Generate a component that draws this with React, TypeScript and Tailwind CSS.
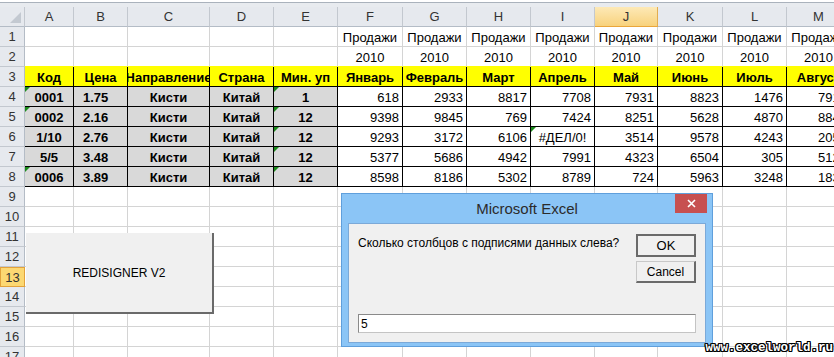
import React from "react";

type Cell = {
  t?: string;
  a?: "l" | "c" | "r" | "b";
  b?: boolean;
  bg?: "y" | "g";
  k?: boolean;
  yb?: boolean;
  tri?: boolean;
};

const letters = ["A", "B", "C", "D", "E", "F", "G", "H", "I", "J", "K", "L", "M"];
const hdrs = ["Код", "Цена", "Направление", "Страна", "Мин. уп", "Январь", "Февраль", "Март", "Апрель", "Май", "Июнь", "Июль", "Август"];
const left = [
  ["0001", "1.75", "Кисти", "Китай", "1"],
  ["0002", "2.16", "Кисти", "Китай", "12"],
  ["1/10", "2.76", "Кисти", "Китай", "12"],
  ["5/5", "3.48", "Кисти", "Китай", "12"],
  ["0006", "3.89", "Кисти", "Китай", "12"],
];
const nums = [
  ["618", "2933", "8817", "7708", "7931", "8823", "1476", "7912"],
  ["9398", "9845", "769", "7424", "8251", "5628", "4870", "8843"],
  ["9293", "3172", "6106", "#ДЕЛ/0!", "3514", "9578", "4243", "2056"],
  ["5377", "5686", "4942", "7991", "4323", "6504", "305", "5127"],
  ["8598", "8186", "5302", "8789", "724", "5963", "3248", "1834"],
];

function buildRows(): Cell[][] {
  const rows: Cell[][] = [];
  // row 1
  rows.push(letters.map((_, i) => (i >= 5 ? { t: "Продажи", a: "c" } : {})));
  // row 2
  rows.push(letters.map((_, i) => (i >= 5 ? { t: "2010", a: "c", yb: true } : { yb: true })));
  // row 3
  rows.push(hdrs.map((h) => ({ t: h, a: "c", b: true, bg: "y", k: true })));
  // rows 4-8
  left.forEach((l, r) => {
    const row: Cell[] = [];
    l.forEach((v, i) => {
      row.push({
        t: v,
        a: i === 1 ? "b" : "c",
        b: true,
        bg: "g",
        k: true,
        tri: (i === 0 && (r === 0 || r === 1 || r === 4)) || i === 4,
      });
    });
    nums[r].forEach((v, i) => {
      const err = v.startsWith("#");
      row.push({ t: v, a: err ? "c" : "r", k: true, tri: err });
    });
    rows.push(row);
  });
  for (let i = 9; i <= 17; i++) rows.push(letters.map(() => ({})));
  return rows;
}

function DataCell({ c }: { c: Cell }) {
  const bgc = c.bg === "y" ? "bg-[#ffff00]" : c.bg === "g" ? "bg-[#d9d9d9]" : "bg-white";
  const br = c.k
    ? "border-r-black border-b-black"
    : c.yb
    ? "border-r-[#d4d4d4] border-b-[#ffff00]"
    : "border-r-[#d4d4d4] border-b-[#d4d4d4]";
  const al =
    c.a === "l"
      ? "justify-start pl-[3px]"
      : c.a === "b"
      ? "justify-start pl-[9px]"
      : c.a === "r"
      ? "justify-end pr-[3px]"
      : "justify-center";
  return (
    <div
      className={`relative flex items-end overflow-hidden whitespace-nowrap border-r border-b pb-[1px] leading-[14px] ${bgc} ${br} ${al} ${
        c.b ? "font-bold" : ""
      }`}
    >
      {c.tri && (
        <div className="absolute left-0 top-0 h-0 w-0 border-t-[5px] border-r-[5px] border-t-[#1b8a1b] border-r-transparent" />
      )}
      {c.t && <span>{c.t}</span>}
    </div>
  );
}

export default function App() {
  const rows = buildRows();
  return (
    <div className="relative h-[357px] w-[834px] overflow-hidden bg-white font-['Liberation_Sans',Arial,sans-serif] text-[13px] text-black">
      {/* top strip */}
      <div className="h-[2px] bg-white" />
      <div className="h-[1px] bg-[#aab2bc]" />
      <div className="h-[4px] bg-[#e8ebef]" />
      {/* grid */}
      <div className="grid w-[851px] auto-rows-[20px] grid-cols-[25px_49px_54px_82px_64px_64px_65px_64px_64px_64px_63px_65px_64px_64px]">
        {/* header row */}
        <div className="relative border-r border-b border-r-[#c3c8cf] border-b-[#b4bcc6] bg-[#e6e9ee]">
          <svg className="absolute bottom-[3px] right-[3px]" width="11" height="11" viewBox="0 0 11 11">
            <polygon points="11,0 11,11 0,11" fill="#c3c9d1" />
          </svg>
        </div>
        {letters.map((l) =>
          l === "J" ? (
            <div
              key={l}
              className="flex items-center justify-center border-r border-b border-r-[#e3ad4f] border-b-[#eaa63b] bg-gradient-to-b from-[#fde9b6] to-[#f8d27c] text-[#333]"
            >
              {l}
            </div>
          ) : (
            <div
              key={l}
              className="flex items-center justify-center border-r border-b border-r-[#c3c8cf] border-b-[#b4bcc6] bg-[#e6e9ee] text-[#333]"
            >
              {l}
            </div>
          )
        )}
        {rows.map((row, ri) => (
          <React.Fragment key={ri}>
            {ri + 1 === 13 ? (
              <div className="flex items-center justify-center border border-[#e2a23b] bg-[#fcd872] pt-[1px] text-[#333]">
                {ri + 1}
              </div>
            ) : (
              <div className="flex items-center justify-center border-r border-b border-r-[#b4bcc6] border-b-[#c3c8cf] bg-[#e6e9ee] pt-[1px] text-[#333]">
                {ri + 1}
              </div>
            )}
            {row.map((c, ci) => (
              <DataCell key={ci} c={c} />
            ))}
          </React.Fragment>
        ))}
      </div>

      {/* REDISIGNER button */}
      <div className="absolute left-[26px] top-[233px] flex h-[81px] w-[188px] items-center justify-center border-r-2 border-b-2 border-r-[#6a6a6a] border-b-[#6a6a6a] bg-[#f0f0f0] text-[12px] text-black">
        REDISIGNER V2
      </div>

      {/* dialog */}
      <div className="absolute left-[341px] top-[193px] flex h-[154px] w-[372px] flex-col border border-[#5f9fdc] bg-[#8bc5f6] px-[6px] pb-[3px]">
        <div className="relative flex h-[29px] shrink-0 items-center justify-center text-[15px] text-[#2b2b2b]">
          <span className="mt-[2px]">Microsoft Excel</span>
          <div className="absolute right-[-1px] top-0 flex h-[19px] w-[32px] items-center justify-center bg-[#c75050]">
            <svg width="9" height="9" viewBox="0 0 9 9">
              <path d="M1 1 L8 8 M8 1 L1 8" stroke="#fff" strokeWidth="1.6" />
            </svg>
          </div>
        </div>
        <div className="flex flex-1 flex-col border border-[#7ba9d8] bg-[#f0f0f0] pl-[9px] pr-[9px] pt-[10px] pb-[9px] text-[12px]">
          <div className="flex items-start justify-between">
            <div className="mt-[2px] leading-[15px]">Сколько столбцов с подписями данных слева?</div>
            <div className="flex flex-col gap-[4px]">
              <div className="flex h-[23px] w-[60px] items-center justify-center border-2 border-[#6a6a6a] bg-[#f0f0f0] text-[13px]">
                OK
              </div>
              <div className="flex h-[22px] w-[60px] items-center justify-center border border-[#c8c8c8] border-r-2 border-b-2 border-r-[#6a6a6a] border-b-[#6a6a6a] bg-[#f0f0f0]">
                Cancel
              </div>
            </div>
          </div>
          <div className="mt-auto flex h-[19px] w-[338px] items-center border border-[#c4c4c4] border-t-[#8a8a8a] border-l-[#8a8a8a] bg-white pl-[2px]">
            5
          </div>
        </div>
      </div>

      {/* watermark */}
      <div className="absolute bottom-[2px] right-[1px] font-['Liberation_Mono',monospace] text-[12.5px] font-bold leading-[14px] text-white [text-shadow:1px_0_0_#000,-1px_0_0_#000,0_1px_0_#000,0_-1px_0_#000,1px_1px_0_#000,-1px_-1px_0_#000,1px_-1px_0_#000,-1px_1px_0_#000]">
        www.excelworld.ru
      </div>
    </div>
  );
}
